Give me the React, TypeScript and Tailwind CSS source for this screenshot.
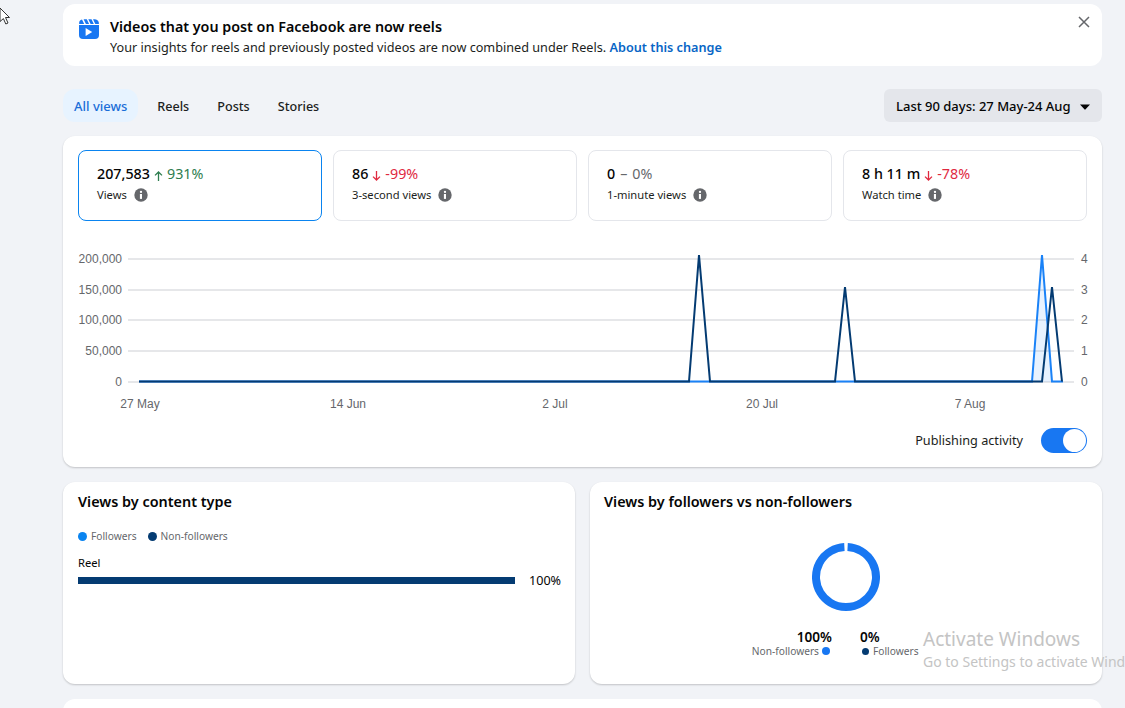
const font = "font-['Noto_Sans',sans-serif]";

function InfoDot() {
  return (
    <svg width="14" height="14" viewBox="0 0 14 14" className="shrink-0">
      <circle cx="7" cy="7" r="6.7" fill="#65676b" />
      <circle cx="7" cy="3.9" r="1.15" fill="#fff" />
      <path d="M5.9 6h2.1v4.9H5.9z" fill="#fff" />
    </svg>
  );
}

function Arrow({ up, color }: { up: boolean; color: string }) {
  return (
    <svg width="9" height="10" viewBox="0 0 9 10" className="mx-[4px] mt-[4px] shrink-0" fill="none" stroke={color} strokeWidth="1.3">
      {up ? <path d="M4.5 10V1M1 4.4 4.5 1 8 4.4" /> : <path d="M4.5 0v9M1 5.6 4.5 9 8 5.6" />}
    </svg>
  );
}

function Metric({ value, delta, label, trend, active }: { value: string; delta: string; label: string; trend: "up" | "down" | "flat"; active?: boolean }) {
  const color = trend === "up" ? "text-[#2e7d4f]" : trend === "down" ? "text-[#e0293f]" : "text-[#65676b]";
  return (
    <div className={`h-[71px] rounded-lg border bg-white pl-[18px] pt-[13px] ${active ? "border-[#0a84f0]" : "border-[#e4e6eb]"}`}>
      <div className="flex items-center text-[14.3px] leading-[20px] text-[#050505]">
        <span className="font-medium">{value}</span>
        {trend === "up" && <Arrow up color="#2e7d4f" />}
        {trend === "down" && <Arrow up={false} color="#e0293f" />}
        {trend === "flat" && <span className="mx-[5px] text-[#65676b]">–</span>}
        <span className={color}>{delta}</span>
      </div>
      <div className="mt-[2px] flex items-center gap-[7px] text-[11.2px] leading-[18px] text-[#1c1e21]">
        {label}
        <InfoDot />
      </div>
    </div>
  );
}

function ViewsChart() {
  const left = ["200,000", "150,000", "100,000", "50,000", "0"];
  const right = ["4", "3", "2", "1", "0"];
  const ys = [259, 290, 320, 351, 382];
  const dates: [number, string][] = [
    [140, "27 May"],
    [348, "14 Jun"],
    [555, "2 Jul"],
    [762, "20 Jul"],
    [970, "7 Aug"],
  ];
  return (
    <svg width="1024" height="180" viewBox="78 245 1024 180" className="block" fontFamily="'Liberation Sans', sans-serif" fontSize="12" fill="#65676b">
      {ys.map((y, i) => (
        <g key={y}>
          <line x1="128" x2="1074" y1={y} y2={y} stroke="#cdcfd4" strokeWidth="1" />
          <text x="122" y={y + 4} textAnchor="end">{left[i]}</text>
          <text x="1081" y={y + 4}>{right[i]}</text>
        </g>
      ))}
      {dates.map(([x, d]) => (
        <text key={d} x={x} y="408" textAnchor="middle">{d}</text>
      ))}
      <path d="M1032 382 1042 255 1052 382z" fill="#1a82f7" fillOpacity="0.1" />
      <path d="M139 381.5H1032L1042 255 1052 381.5H1063" fill="none" stroke="#1a82f7" strokeWidth="2" />
      <path d="M139 381.5H689L699 255 710 381.5H835L845 287 855 381.5H1042L1052 287 1062 381.5" fill="none" stroke="#043b72" strokeWidth="2" />
    </svg>
  );
}

export default function App() {
  return (
    <div className={`relative h-[708px] w-[1125px] overflow-hidden bg-[#f1f3f7] pl-[63px] pr-[23px] pt-1 ${font}`}>
      {/* mouse pointer */}
      <svg width="11" height="18" viewBox="0 0 11 18" className="absolute left-0 top-[8px]" fill="#fff" stroke="#333" strokeWidth="1">
        <path d="M0 0 9.5 9.5H5.5L8 15 5.8 16 3.4 10.6 0 13.5z" />
      </svg>

      <div className="relative flex h-[62px] items-start rounded-xl bg-white pl-4 pt-[12px]">
        <svg width="20" height="20" viewBox="0 0 20 20" className="mt-[3px] shrink-0">
          <path d="M0 6h20v10a4 4 0 0 1-4 4H4a4 4 0 0 1-4-4z" fill="#1877f2" />
          <path d="M.2 5A4 4 0 0 1 3 .6L5.2 5zM4.6.2h3.2L10.1 5H6.9zM9.3.2h3.2L14.8 5h-3.2zM14 .2h2A4 4 0 0 1 19.8 5h-3.5z" fill="#1877f2" />
          <path d="M6.6 9v8l6.6-4z" fill="#fff" />
        </svg>
        <div className="ml-[11px]">
          <div className="text-[14.3px] font-semibold leading-[21px] text-[#050505]">Videos that you post on Facebook are now reels</div>
          <div className="mt-[1px] text-[12.66px] leading-[19px] text-[#1c1e21]">
            Your insights for reels and previously posted videos are now combined under Reels.{" "}
            <span className="font-semibold text-[#0866c6]">About this change</span>
          </div>
        </div>
        <svg width="12" height="12" viewBox="0 0 12 12" className="absolute right-[12px] top-[12px]" stroke="#65676b" strokeWidth="1.5">
          <path d="M1 1l10 10M11 1 1 11" />
        </svg>
      </div>

      <div className="mt-[23px] flex h-[33px] items-center justify-between">
        <div className="flex items-center text-[12.6px] font-medium leading-[20px] text-[#1c1e21]">
          <span className="flex h-[33px] items-center rounded-xl bg-[#e7f3ff] px-[11px] pt-[1px] text-[13px] text-[#1a6ed8]">All views</span>
          <span className="ml-[19px] pt-[2px]">Reels</span>
          <span className="ml-[28px] pt-[2px]">Posts</span>
          <span className="ml-[28px] pt-[2px]">Stories</span>
        </div>
        <div className="flex h-[33px] w-[218px] items-center rounded-md bg-[#e4e6eb] pl-[12px] pt-[2px] text-[13px] font-medium text-[#050505]">
          Last 90 days: 27 May-24 Aug
          <svg width="10" height="6" viewBox="0 0 10 6" className="ml-[9px]">
            <path d="M0 .5h10L5.6 5.3a.8.8 0 0 1-1.2 0z" fill="#050505" />
          </svg>
        </div>
      </div>

      <div className="mt-[14px] h-[331px] rounded-xl bg-white pt-[14px] shadow-[0_1px_2px_rgba(0,0,0,0.2)]">
        <div className="mx-[15px] grid grid-cols-4 gap-[11px]">
          <Metric active value="207,583" delta="931%" label="Views" trend="up" />
          <Metric value="86" delta="-99%" label="3-second views" trend="down" />
          <Metric value="0" delta="0%" label="1-minute views" trend="flat" />
          <Metric value="8 h 11 m" delta="-78%" label="Watch time" trend="down" />
        </div>
        <div className="ml-[15px] mt-[24px]">
          <ViewsChart />
        </div>
        <div className="mr-[15px] mt-[3px] flex items-center justify-end gap-[18px] text-[12.7px] text-[#1c1e21]">
          Publishing activity
          <div className="flex h-[25px] w-[46px] items-center justify-end rounded-full bg-[#1877f2] pr-[1px]">
            <div className="h-[23px] w-[23px] rounded-full bg-white" />
          </div>
        </div>
      </div>

      <div className="mt-[15px] grid h-[202px] grid-cols-2 gap-[15px]">
        <div className="rounded-xl bg-white px-[15px] pt-[9px] shadow-[0_1px_2px_rgba(0,0,0,0.2)]">
          <div className="text-[14.4px] font-semibold leading-[22px] text-[#050505]">Views by content type</div>
          <div className="mt-[15px] flex items-center text-[10.2px] leading-[16px] text-[#65676b]">
            <span className="mr-[4px] h-[9px] w-[9px] rounded-full bg-[#0a84f0]" />
            Followers
            <span className="ml-[11px] mr-[4px] h-[9px] w-[9px] rounded-full bg-[#043b72]" />
            Non-followers
          </div>
          <div className="mt-[11px] text-[11.2px] leading-[16px] text-[#050505]">Reel</div>
          <div className="mt-[6px] flex items-center">
            <div className="h-[7px] w-[437px] shrink-0 bg-[#043b72]" />
            <span className="ml-[14px] shrink-0 text-[12.6px] leading-[7px] text-[#050505]">100%</span>
          </div>
        </div>

        <div className="rounded-xl bg-white pl-[14px] pt-[9px] shadow-[0_1px_2px_rgba(0,0,0,0.2)]">
          <div className="text-[14.4px] font-semibold leading-[22px] text-[#050505]">Views by followers vs non-followers</div>
          <svg width="68" height="68" viewBox="0 0 68 68" className="ml-[208px] mt-[30px] block" fill="none">
            <path d="M35.6 4.04A30 30 0 1 1 32.4 4.04" stroke="#1877f2" strokeWidth="8" />
          </svg>
          <div className="ml-[147px] mt-[18px] flex text-[#050505]">
            <div className="flex w-[79px] flex-col items-end">
              <span className="-mr-[2px] text-[13.6px] font-semibold leading-[15px]">100%</span>
              <span className="flex items-center text-[10.2px] leading-[14px] text-[#65676b]">
                Non-followers
                <span className="ml-[3px] h-[8px] w-[8px] rounded-full bg-[#1877f2]" />
              </span>
            </div>
            <div className="ml-[30px] flex flex-col">
              <span className="text-[13.6px] font-semibold leading-[15px]">0%</span>
              <span className="ml-[2px] flex items-center text-[10.2px] leading-[14px] text-[#65676b]">
                <span className="mr-[4px] h-[7px] w-[7px] rounded-full bg-[#043b72]" />
                Followers
              </span>
            </div>
          </div>
        </div>
      </div>

      <div className="mt-[15px] h-[60px] rounded-xl bg-white" />

      {/* windows watermark, over the page */}
      <div className="pointer-events-none absolute left-[923px] top-[627px] whitespace-nowrap text-[#c4c4c4]">
        <div className="text-[19px] leading-[25px]">Activate Windows</div>
        <div className="text-[14px] leading-[20px]">Go to Settings to activate Windows.</div>
      </div>
    </div>
  );
}
